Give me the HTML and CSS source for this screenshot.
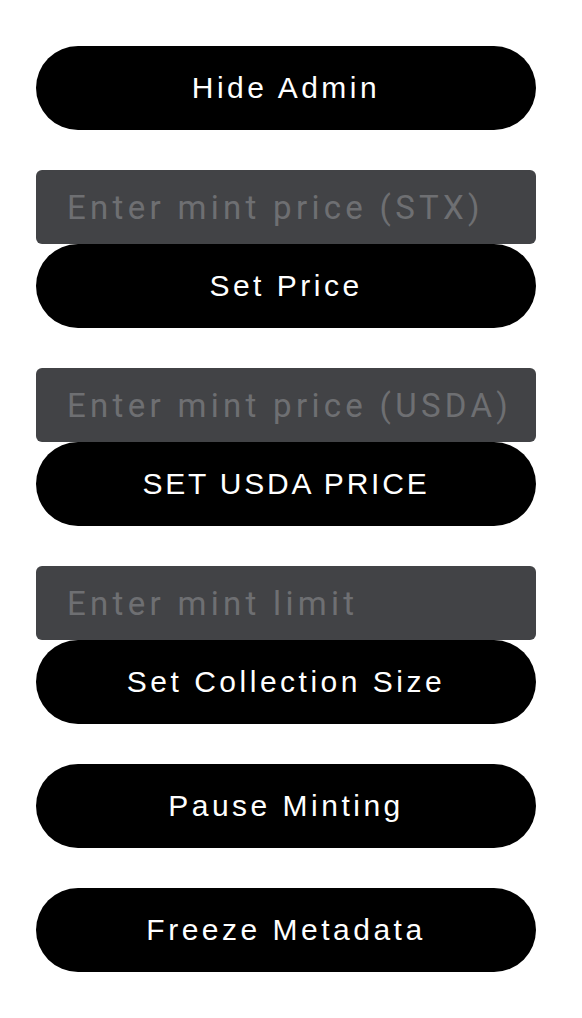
FILE: index.html
```html
<!DOCTYPE html>
<html lang="en">
<head>
<meta charset="utf-8">
<title>Admin</title>
<link rel="stylesheet" href="styles.css">
</head>
<body>
<main class="admin">
  <button class="btn">Hide Admin</button>
  <div class="group">
    <input class="field" type="text" placeholder="Enter mint price (STX)">
    <button class="btn">Set Price</button>
  </div>
  <div class="group">
    <input class="field" type="text" placeholder="Enter mint price (USDA)">
    <button class="btn btn-caps">SET USDA PRICE</button>
  </div>
  <div class="group">
    <input class="field" type="text" placeholder="Enter mint limit">
    <button class="btn">Set Collection Size</button>
  </div>
  <button class="btn">Pause Minting</button>
  <button class="btn">Freeze Metadata</button>
</main>
</body>
</html>
```
FILE: styles.css
```css
html, body {
  margin: 0;
  padding: 0;
  background: #ffffff;
}
.admin {
  display: flex;
  flex-direction: column;
  gap: 40px;
  width: 500px;
  padding: 46px 36px;
}
.group {
  display: flex;
  flex-direction: column;
}
.btn {
  display: block;
  width: 500px;
  height: 84px;
  margin: 0;
  padding: 0;
  border: none;
  border-radius: 42px;
  background: #000000;
  color: #ffffff;
  font-family: "Liberation Sans", Arial, sans-serif;
  font-size: 30px;
  font-weight: 400;
  letter-spacing: 3.5px;
  text-align: center;
}
.btn-caps {
  letter-spacing: 2.8px;
}
.field {
  display: block;
  box-sizing: border-box;
  width: 500px;
  height: 74px;
  margin: 0;
  padding: 0 30px 0 31px;
  border: none;
  border-radius: 6px;
  background: #424346;
  color: #ffffff;
  font-family: Roboto, "Noto Sans", sans-serif;
  font-size: 33px;
  letter-spacing: 4.3px;
  outline: none;
}
.field::placeholder {
  color: #6e6f72;
  opacity: 1;
}
```
